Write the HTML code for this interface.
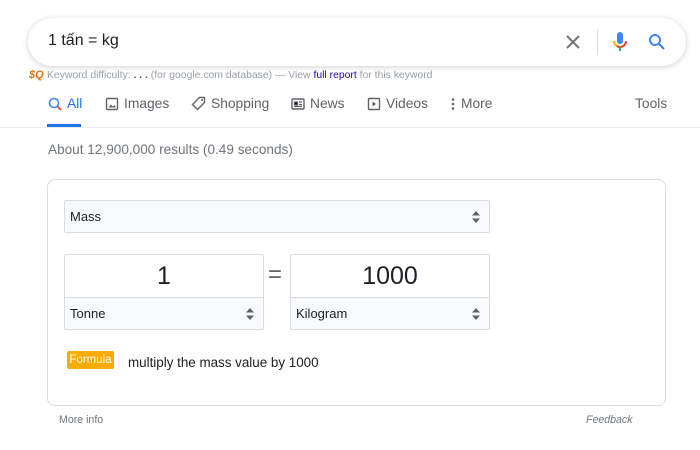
<!DOCTYPE html>
<html><head><meta charset="utf-8"><style>
*{margin:0;padding:0;box-sizing:border-box}
body{width:700px;height:450px;background:#fff;font-family:"Liberation Sans",Arial,sans-serif;position:relative;overflow:hidden;color:#202124}
.a{position:absolute;white-space:nowrap}
.sb{left:28px;top:18px;width:658px;height:48px;border-radius:24px;box-shadow:0 1px 6px rgba(32,33,36,.22);background:#fff}
.tab{top:96px;font-size:13.8px;color:#5f6368}
.sel{background:#f8f9fa;border:1px solid #dadce0;border-radius:2px}
.arr{position:absolute;right:9px;top:50%;margin-top:-6px;width:8px;height:12px}
</style></head><body>
<div class="a sb"></div>
<div class="a" style="left:48px;top:32px;font-size:16px;color:#202124">1 tấn = kg</div>
<svg class="a" style="left:564px;top:33px" width="18" height="18" viewBox="0 0 18 18"><path d="M3 3L15 15M15 3L3 15" stroke="#70757a" stroke-width="2"/></svg>
<div class="a" style="left:597px;top:29px;width:1px;height:26px;background:#dadce0"></div>
<svg class="a" style="left:612px;top:31px" width="16" height="22" viewBox="0 0 16 22"><rect x="5" y="1" width="6" height="12" rx="3" fill="#4285f4"/><path d="M2 10a6 6 0 0 0 12 0" stroke="#ea4335" stroke-width="2" fill="none"/><path d="M8 16v4" stroke="#34a853" stroke-width="2"/><path d="M2 10a6 6 0 0 0 3 5" stroke="#fbbc04" stroke-width="2" fill="none"/></svg>
<svg class="a" style="left:648px;top:33px" width="18" height="18" viewBox="0 0 18 18"><circle cx="7" cy="7" r="5" stroke="#4285f4" stroke-width="2" fill="none"/><path d="M11 11l5 5" stroke="#4285f4" stroke-width="2.2"/></svg>
<div class="a" style="left:29px;top:69px;font-size:11px;font-weight:bold;color:#e8710a;font-style:italic">$Q</div>
<div class="a" style="left:47px;top:70px;font-size:10.4px;color:#9aa0a6">Keyword difficulty: <b style="color:#555">. . .</b> (for google.com database) — View <span style="color:#1a0dab">full report</span> for this keyword</div>
<svg class="a" style="left:48px;top:97px" width="14" height="14" viewBox="0 0 14 14"><circle cx="6" cy="6" r="4.5" stroke="#4285f4" stroke-width="1.6" fill="none"/><path d="M9.5 9.5l3.5 3.5" stroke="#ea4335" stroke-width="1.8"/></svg>
<div class="a tab" style="left:67px;color:#1a73e8">All</div>
<div class="a" style="left:47px;top:124px;width:34px;height:3px;background:#1a73e8"></div>
<svg class="a" style="left:105px;top:97px" width="14" height="14" viewBox="0 0 14 14"><rect x="1.5" y="1.5" width="11" height="11" rx="1" stroke="#5f6368" stroke-width="1.4" fill="none"/><path d="M3.5 10.5l2.5-3 2 2 1.5-1.5 1.5 2.5z" fill="#5f6368"/></svg>
<div class="a tab" style="left:124px">Images</div>
<svg class="a" style="left:191px;top:96px" width="16" height="16" viewBox="0 0 16 16"><path d="M8.5 1.5h5v5l-7 7-5-5z" stroke="#5f6368" stroke-width="1.4" fill="none"/><circle cx="11" cy="4" r="1" fill="#5f6368"/></svg>
<div class="a tab" style="left:211px">Shopping</div>
<svg class="a" style="left:291px;top:97px" width="14" height="14" viewBox="0 0 14 14"><rect x="1" y="2" width="12" height="10" rx="1" stroke="#5f6368" stroke-width="1.4" fill="none"/><path d="M3.5 5h3v3h-3zM8 5h3M8 7.5h3M3.5 9.5h7.5" stroke="#5f6368" stroke-width="1.2"/></svg>
<div class="a tab" style="left:310px">News</div>
<svg class="a" style="left:367px;top:97px" width="14" height="14" viewBox="0 0 14 14"><rect x="1.5" y="1.5" width="11" height="11" rx="1" stroke="#5f6368" stroke-width="1.4" fill="none"/><path d="M5.5 4.5l3.5 2.5-3.5 2.5z" fill="#5f6368"/></svg>
<div class="a tab" style="left:386px">Videos</div>
<svg class="a" style="left:451px;top:97px" width="4" height="14" viewBox="0 0 4 14"><circle cx="2" cy="2.5" r="1.3" fill="#5f6368"/><circle cx="2" cy="7" r="1.3" fill="#5f6368"/><circle cx="2" cy="11.5" r="1.3" fill="#5f6368"/></svg>
<div class="a tab" style="left:461px">More</div>
<div class="a tab" style="left:635px">Tools</div>
<div class="a" style="left:0;top:127px;width:700px;height:1px;background:#ebebeb"></div>
<div class="a" style="left:48px;top:142px;font-size:13.6px;color:#70757a">About 12,900,000 results (0.49 seconds)</div>
<div class="a" style="left:47px;top:179px;width:619px;height:227px;border:1px solid #dadce0;border-radius:8px"></div>
<div class="a sel" style="left:64px;top:200px;width:426px;height:33px"><span class="a" style="left:5px;top:8px;font-size:13px">Mass</span><svg class="arr" viewBox="0 0 8 12"><path d="M4 0L8 4.5H0zM4 12L0 7.5H8z" fill="#5f6368"/></svg></div>
<div class="a" style="left:64px;top:254px;width:200px;height:76px;border:1px solid #dadce0;border-radius:2px;background:#fff"></div>
<div class="a" style="left:64px;top:262px;width:200px;text-align:center;font-size:25px">1</div>
<div class="a sel" style="left:64px;top:297px;width:200px;height:33px;border-radius:0 0 2px 2px"><span class="a" style="left:5px;top:8px;font-size:13px">Tonne</span><svg class="arr" viewBox="0 0 8 12"><path d="M4 0L8 4.5H0zM4 12L0 7.5H8z" fill="#5f6368"/></svg></div>
<div class="a" style="left:268px;top:261px;font-size:24px;color:#5f6368">=</div>
<div class="a" style="left:290px;top:254px;width:200px;height:76px;border:1px solid #dadce0;border-radius:2px;background:#fff"></div>
<div class="a" style="left:290px;top:262px;width:200px;text-align:center;font-size:25px">1000</div>
<div class="a sel" style="left:290px;top:297px;width:200px;height:33px;border-radius:0 0 2px 2px"><span class="a" style="left:5px;top:8px;font-size:13px">Kilogram</span><svg class="arr" viewBox="0 0 8 12"><path d="M4 0L8 4.5H0zM4 12L0 7.5H8z" fill="#5f6368"/></svg></div>
<div class="a" style="left:67px;top:351px;width:47px;height:18px;background:#f9ab00;border-radius:2px;color:#fff;font-size:11.5px;line-height:18px;text-align:center">Formula</div>
<div class="a" style="left:128px;top:355px;font-size:13.4px;color:#202124">multiply the mass value by 1000</div>
<div class="a" style="left:59px;top:414px;font-size:10.6px;color:#70757a">More info</div>
<div class="a" style="left:586px;top:414px;font-size:10.6px;color:#70757a;font-style:italic">Feedback</div>
</body></html>
